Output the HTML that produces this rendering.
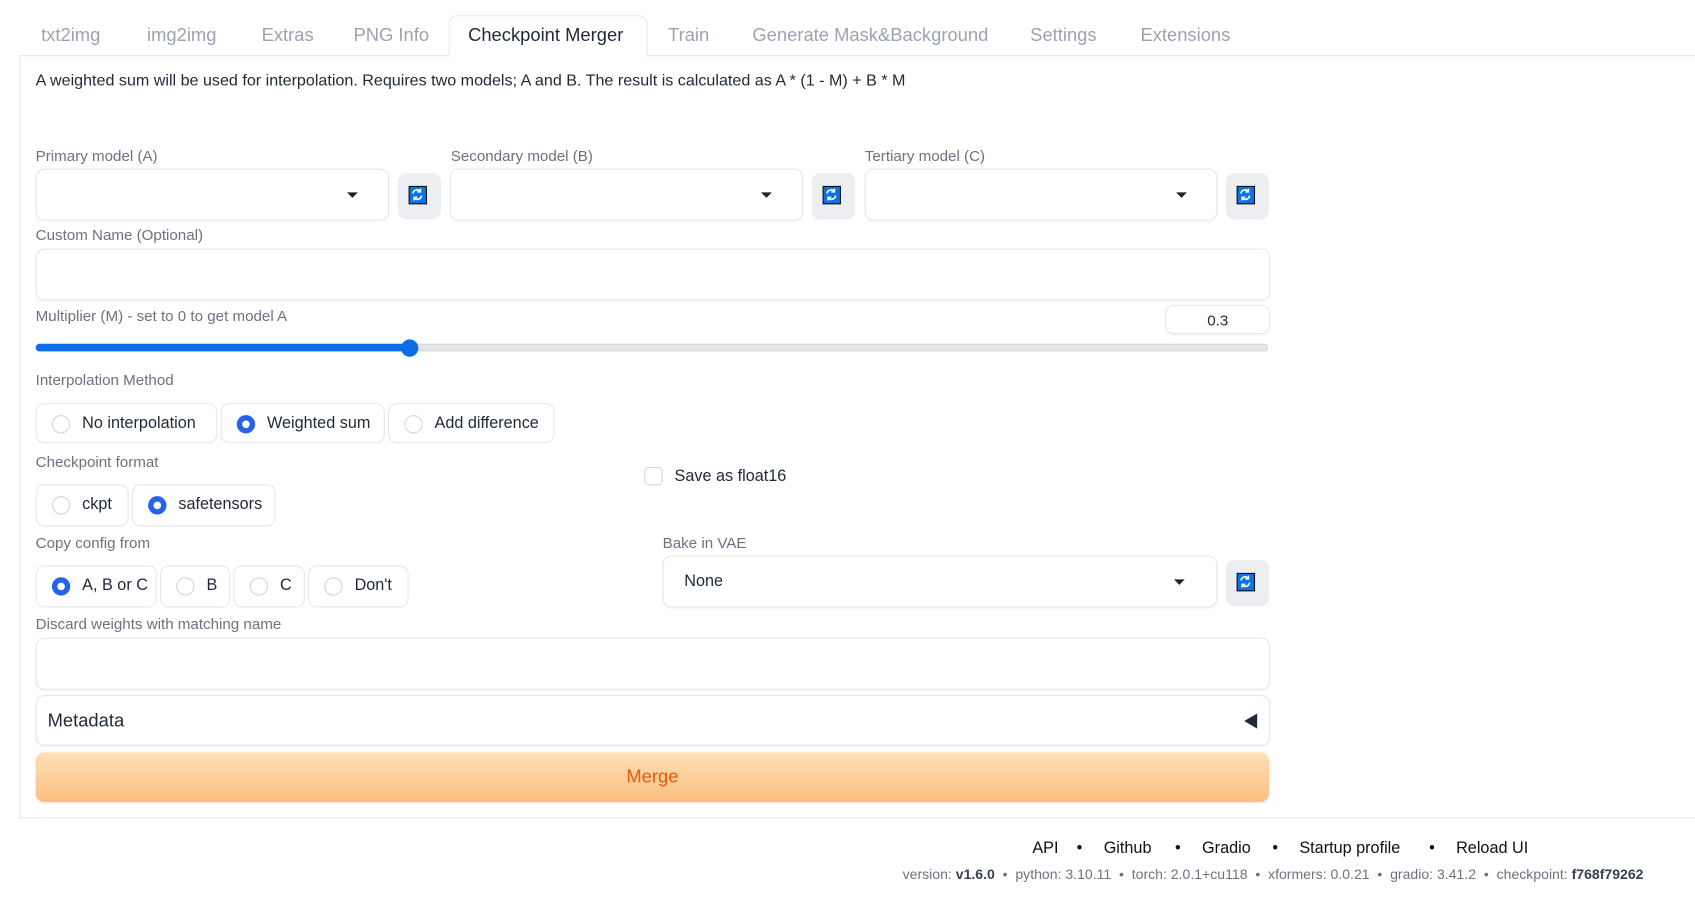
<!DOCTYPE html>
<html><head><meta charset="utf-8"><style>
html,body{margin:0;padding:0;background:#fff;overflow:hidden;width:1695px;height:913px}
#w{position:absolute;left:0;top:0;width:1568px;height:845px;transform:scale(1.08099);transform-origin:0 0;font-family:"Liberation Sans",sans-serif;color:#1f2937}
.a{position:absolute}
.lbl{position:absolute;font-size:14px;color:#6b7280}
.tab{position:absolute;top:23px;font-size:17px;color:#9ca3af}
.box{position:absolute;border:1px solid #e5e7eb;border-radius:8px;background:#fff;box-shadow:0 1px 2px rgba(0,0,0,.04)}
.btn{position:absolute;background:#eceef1;border-radius:8px;}
.ic{position:absolute;left:10px;top:12px;width:17px;height:17px;background:#0b74de;border:1.5px solid #111;box-sizing:border-box}
.dd{position:absolute;width:0;height:0;border-left:5px solid transparent;border-right:5px solid transparent;border-top:5px solid #222}
.r{position:absolute;border:1px solid #e5e7eb;border-radius:8px;background:#fff;height:37px;font-size:15px;color:#1f2937;box-sizing:border-box}
.r span{position:absolute;top:9px}
.c{position:absolute;left:14px;top:10px;width:17px;height:17px;border-radius:50%;border:1px solid #d1d5db;box-sizing:border-box;background:#fff}
.c.on{border:5px solid #2563eb;background:#fff}
.f{position:absolute;top:776px;font-size:15px;color:#111}
</style></head><body><div id="w">
<div class="tab" style="left:38px">txt2img</div>
<div class="tab" style="left:136px">img2img</div>
<div class="tab" style="left:242px">Extras</div>
<div class="tab" style="left:327px">PNG Info</div>
<div class="a" style="left:415px;top:14px;width:182px;height:38px;border:1px solid #e5e7eb;border-bottom:none;border-radius:8px 8px 0 0;background:#fff;z-index:2"></div>
<div class="tab" style="left:433px;color:#1f2937;z-index:3">Checkpoint Merger</div>
<div class="tab" style="left:618px">Train</div>
<div class="tab" style="left:696px">Generate Mask&amp;Background</div>
<div class="tab" style="left:953px">Settings</div>
<div class="tab" style="left:1055px">Extensions</div>
<div class="a" style="left:18px;top:51px;width:1550px;height:704px;border-left:1px solid #e5e7eb;border-top:1px solid #e5e7eb;border-bottom:1px solid #e5e7eb"></div>
<div class="a" style="left:33px;top:67px;font-size:14.9px">A weighted sum will be used for interpolation. Requires two models; A and B. The result is calculated as A * (1 - M) + B * M</div>

<div class="lbl" style="left:33px;top:136px">Primary model (A)</div>
<div class="lbl" style="left:417px;top:136px">Secondary model (B)</div>
<div class="lbl" style="left:800px;top:136px">Tertiary model (C)</div>
<div class="box" style="left:33px;top:156px;width:325px;height:46px"><div class="dd" style="left:287px;top:21px"></div></div>
<div class="btn" style="left:368px;top:160px;width:40px;height:43px"><div class="ic"><svg width="14" height="14" viewBox="0 0 14 14" style="position:absolute;left:0;top:0"><path d="M3 6a4 4 0 0 1 7-2M11 8a4 4 0 0 1-7 2" stroke="#fff" stroke-width="1.5" fill="none"/><path d="M10 1.5v3h-3M4 12.5v-3h3" stroke="#fff" stroke-width="1.3" fill="none"/></svg></div></div>
<div class="box" style="left:416px;top:156px;width:325px;height:46px"><div class="dd" style="left:287px;top:21px"></div></div>
<div class="btn" style="left:751px;top:160px;width:40px;height:43px"><div class="ic"><svg width="14" height="14" viewBox="0 0 14 14" style="position:absolute;left:0;top:0"><path d="M3 6a4 4 0 0 1 7-2M11 8a4 4 0 0 1-7 2" stroke="#fff" stroke-width="1.5" fill="none"/><path d="M10 1.5v3h-3M4 12.5v-3h3" stroke="#fff" stroke-width="1.3" fill="none"/></svg></div></div>
<div class="box" style="left:800px;top:156px;width:324px;height:46px"><div class="dd" style="left:287px;top:21px"></div></div>
<div class="btn" style="left:1134px;top:160px;width:40px;height:43px"><div class="ic"><svg width="14" height="14" viewBox="0 0 14 14" style="position:absolute;left:0;top:0"><path d="M3 6a4 4 0 0 1 7-2M11 8a4 4 0 0 1-7 2" stroke="#fff" stroke-width="1.5" fill="none"/><path d="M10 1.5v3h-3M4 12.5v-3h3" stroke="#fff" stroke-width="1.3" fill="none"/></svg></div></div>

<div class="lbl" style="left:33px;top:209px">Custom Name (Optional)</div>
<div class="box" style="left:33px;top:230px;width:1140px;height:46px"></div>

<div class="lbl" style="left:33px;top:284px">Multiplier (M) - set to 0 to get model A</div>
<div class="box" style="left:1078px;top:282px;width:95px;height:25px;font-size:14px;text-align:center;line-height:26px">0.3</div>
<div class="a" style="left:33px;top:318px;width:1140px;height:7px;border-radius:4px;background:#e5e7eb;border:1px solid #d1d5db;box-sizing:border-box"></div>
<div class="a" style="left:33px;top:318px;width:346px;height:7px;border-radius:4px;background:#0b6ee8"></div>
<div class="a" style="left:371px;top:314px;width:16px;height:16px;border-radius:50%;background:#0b6ee8"></div>

<div class="lbl" style="left:33px;top:343px">Interpolation Method</div>
<div class="r" style="left:33px;top:373px;width:168px"><div class="c"></div><span style="left:42px">No interpolation</span></div>
<div class="r" style="left:204px;top:373px;width:152px"><div class="c on"></div><span style="left:42px">Weighted sum</span></div>
<div class="r" style="left:359px;top:373px;width:154px"><div class="c"></div><span style="left:42px">Add difference</span></div>

<div class="lbl" style="left:33px;top:419px">Checkpoint format</div>
<div class="r" style="left:33px;top:448px;width:86px;height:39px"><div class="c"></div><span style="left:42px">ckpt</span></div>
<div class="r" style="left:122px;top:448px;width:133px;height:39px"><div class="c on"></div><span style="left:42px">safetensors</span></div>
<div class="a" style="left:596px;top:432px;width:17px;height:17px;border:1px solid #d1d5db;border-radius:4px;box-sizing:border-box"></div>
<div class="a" style="left:624px;top:432px;font-size:15px">Save as float16</div>

<div class="lbl" style="left:33px;top:494px">Copy config from</div>
<div class="r" style="left:33px;top:523px;width:112px;height:39px"><div class="c on"></div><span style="left:42px">A, B or C</span></div>
<div class="r" style="left:148px;top:523px;width:65px;height:39px"><div class="c"></div><span style="left:42px">B</span></div>
<div class="r" style="left:216px;top:523px;width:66px;height:39px"><div class="c"></div><span style="left:42px">C</span></div>
<div class="r" style="left:285px;top:523px;width:93px;height:39px"><div class="c"></div><span style="left:42px">Don't</span></div>

<div class="lbl" style="left:613px;top:494px">Bake in VAE</div>
<div class="box" style="left:613px;top:514px;width:511px;height:46px"><span class="a" style="left:19px;top:14px;font-size:15px">None</span><div class="dd" style="left:472px;top:21px"></div></div>
<div class="btn" style="left:1134px;top:518px;width:40px;height:43px"><div class="ic"><svg width="14" height="14" viewBox="0 0 14 14" style="position:absolute;left:0;top:0"><path d="M3 6a4 4 0 0 1 7-2M11 8a4 4 0 0 1-7 2" stroke="#fff" stroke-width="1.5" fill="none"/><path d="M10 1.5v3h-3M4 12.5v-3h3" stroke="#fff" stroke-width="1.3" fill="none"/></svg></div></div>

<div class="lbl" style="left:33px;top:569px">Discard weights with matching name</div>
<div class="box" style="left:33px;top:590px;width:1140px;height:46px"></div>
<div class="box" style="left:33px;top:643px;width:1140px;height:45px"><span class="a" style="left:10px;top:13px;font-size:17px">Metadata</span><div class="a" style="left:1117px;top:16px;width:0;height:0;border-top:7px solid transparent;border-bottom:7px solid transparent;border-right:12px solid #1f2937"></div></div>
<div class="a" style="left:33px;top:696px;width:1141px;height:46px;border-radius:8px;background:linear-gradient(#fedfb5,#fbbf80);box-shadow:0 1px 2px rgba(0,0,0,.08);text-align:center;line-height:46px;font-size:17px;color:#ea580c">Merge</div>

<div class="f" style="left:955px">API</div>
<div class="f" style="left:996px">•</div>
<div class="f" style="left:1021px">Github</div>
<div class="f" style="left:1087px">•</div>
<div class="f" style="left:1112px">Gradio</div>
<div class="f" style="left:1177px">•</div>
<div class="f" style="left:1202px">Startup profile</div>
<div class="f" style="left:1322px">•</div>
<div class="f" style="left:1347px">Reload UI</div>
<div class="a" style="left:835px;top:801px;font-size:13px;color:#6b7280;white-space:nowrap">version: <b style="color:#374151">v1.6.0</b> &nbsp;•&nbsp; python: 3.10.11 &nbsp;•&nbsp; torch: 2.0.1+cu118 &nbsp;•&nbsp; xformers: 0.0.21 &nbsp;•&nbsp; gradio: 3.41.2 &nbsp;•&nbsp; checkpoint: <b style="color:#374151">f768f79262</b></div>
</div></body></html>
